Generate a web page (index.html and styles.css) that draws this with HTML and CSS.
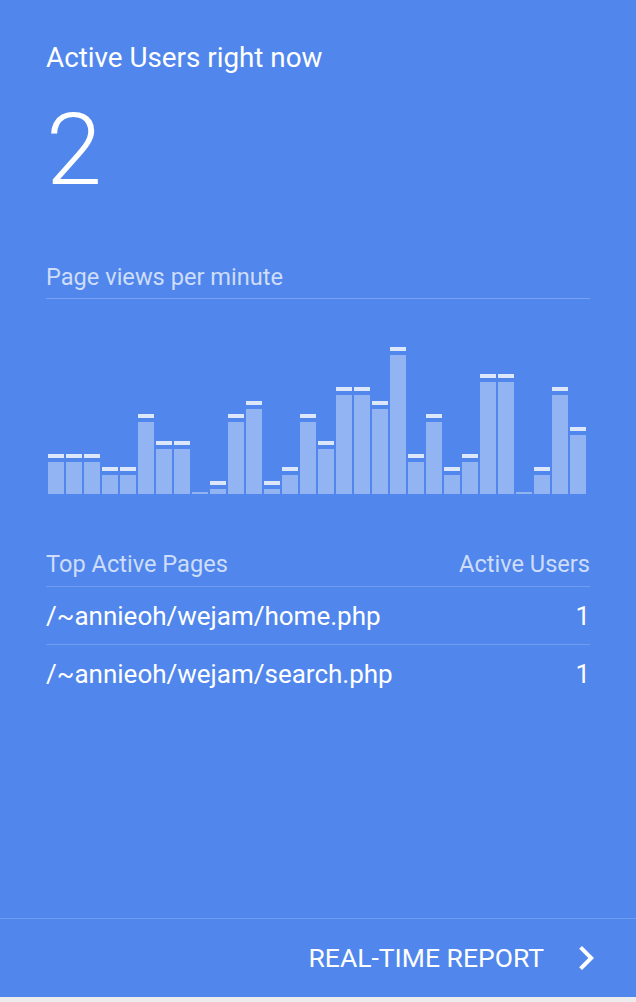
FILE: index.html
```html
<!DOCTYPE html>
<html lang="en">
<head>
<meta charset="utf-8">
<title>Active Users</title>
<link rel="stylesheet" href="styles.css">
</head>
<body>
<div class="card">
  <div class="card-body">
    <h1 class="title">Active Users right now</h1>
    <div class="count">2</div>
    <div class="chart-label">Page views per minute</div>
    <div class="chart">
      <div class="col" style="--v:3"><span class="cap"></span><span class="bar"></span></div>
      <div class="col" style="--v:3"><span class="cap"></span><span class="bar"></span></div>
      <div class="col" style="--v:3"><span class="cap"></span><span class="bar"></span></div>
      <div class="col" style="--v:2"><span class="cap"></span><span class="bar"></span></div>
      <div class="col" style="--v:2"><span class="cap"></span><span class="bar"></span></div>
      <div class="col" style="--v:6"><span class="cap"></span><span class="bar"></span></div>
      <div class="col" style="--v:4"><span class="cap"></span><span class="bar"></span></div>
      <div class="col" style="--v:4"><span class="cap"></span><span class="bar"></span></div>
      <div class="col zero"><span class="bar"></span></div>
      <div class="col" style="--v:1"><span class="cap"></span><span class="bar"></span></div>
      <div class="col" style="--v:6"><span class="cap"></span><span class="bar"></span></div>
      <div class="col" style="--v:7"><span class="cap"></span><span class="bar"></span></div>
      <div class="col" style="--v:1"><span class="cap"></span><span class="bar"></span></div>
      <div class="col" style="--v:2"><span class="cap"></span><span class="bar"></span></div>
      <div class="col" style="--v:6"><span class="cap"></span><span class="bar"></span></div>
      <div class="col" style="--v:4"><span class="cap"></span><span class="bar"></span></div>
      <div class="col" style="--v:8"><span class="cap"></span><span class="bar"></span></div>
      <div class="col" style="--v:8"><span class="cap"></span><span class="bar"></span></div>
      <div class="col" style="--v:7"><span class="cap"></span><span class="bar"></span></div>
      <div class="col" style="--v:11"><span class="cap"></span><span class="bar"></span></div>
      <div class="col" style="--v:3"><span class="cap"></span><span class="bar"></span></div>
      <div class="col" style="--v:6"><span class="cap"></span><span class="bar"></span></div>
      <div class="col" style="--v:2"><span class="cap"></span><span class="bar"></span></div>
      <div class="col" style="--v:3"><span class="cap"></span><span class="bar"></span></div>
      <div class="col" style="--v:9"><span class="cap"></span><span class="bar"></span></div>
      <div class="col" style="--v:9"><span class="cap"></span><span class="bar"></span></div>
      <div class="col zero"><span class="bar"></span></div>
      <div class="col" style="--v:2"><span class="cap"></span><span class="bar"></span></div>
      <div class="col" style="--v:8"><span class="cap"></span><span class="bar"></span></div>
      <div class="col" style="--v:5"><span class="cap"></span><span class="bar"></span></div>
    </div>
    <div class="table">
      <div class="thead">
        <span>Top Active Pages</span>
        <span>Active Users</span>
      </div>
      <div class="row">
        <span>/~annieoh/wejam/home.php</span>
        <span>1</span>
      </div>
      <div class="row">
        <span>/~annieoh/wejam/search.php</span>
        <span>1</span>
      </div>
    </div>
  </div>
  <div class="footer">
    <span class="footer-link">REAL-TIME REPORT</span>
    <svg class="chevron" viewBox="0 0 24 24" width="48" height="48" aria-hidden="true"><path d="M10 6L8.59 7.41 13.17 12l-4.58 4.59L10 18l6-6z" fill="#fff"/></svg>
  </div>
</div>
</body>
</html>
```
FILE: styles.css
```css
html, body {
  margin: 0;
  padding: 0;
}
body {
  background: #ececec;
  font-family: Roboto, "Noto Sans", "Liberation Sans", sans-serif;
  color: #fff;
}
.card {
  height: 997px;
  background: #5187ec;
  box-shadow: 0 1px 4px rgba(0, 0, 0, 0.35);
  display: flex;
  flex-direction: column;
}
.card-body {
  padding: 42px 46px 0 46px;
  flex: 1;
}
.title {
  margin: 0;
  font-size: 27.8px;
  line-height: 32px;
  font-weight: 400;
}
.count {
  margin-top: 26px;
  font-size: 101px;
  line-height: 100px;
  font-weight: 300;
}
.chart-label {
  margin-top: 63px;
  font-size: 23.6px;
  line-height: 28px;
  color: rgba(255, 255, 255, 0.72);
  border-bottom: 1px solid rgba(255, 255, 255, 0.22);
  padding-bottom: 7px;
}
.chart {
  margin-top: 35px;
  height: 160px;
  display: flex;
  align-items: flex-end;
  gap: 2px;
  padding-left: 2px;
}
.col {
  width: 16px;
  height: calc(var(--v) * 160px / 12);
  display: flex;
  flex-direction: column;
}
.col.zero {
  height: 2px;
}
.cap {
  height: 4px;
  margin-bottom: 4px;
  background: rgba(255, 255, 255, 0.8);
}
.bar {
  flex: 1;
  background: rgba(255, 255, 255, 0.38);
}
.table {
  margin-top: 56px;
}
.thead {
  display: flex;
  justify-content: space-between;
  font-size: 23.6px;
  line-height: 28px;
  color: rgba(255, 255, 255, 0.72);
  padding-bottom: 8px;
  border-bottom: 1px solid rgba(255, 255, 255, 0.18);
}
.row {
  display: flex;
  justify-content: space-between;
  font-size: 26px;
  line-height: 57px;
  padding-top: 1px;
  height: 56px;
}
.row + .row {
  border-top: 1px solid rgba(255, 255, 255, 0.18);
}
.footer {
  height: 78px;
  border-top: 1px solid rgba(255, 255, 255, 0.18);
  display: flex;
  align-items: center;
  justify-content: flex-end;
  padding-right: 26px;
}
.footer-link {
  font-size: 26.5px;
  line-height: 78px;
}
.chevron {
  margin-left: 18px;
  display: block;
}
```
